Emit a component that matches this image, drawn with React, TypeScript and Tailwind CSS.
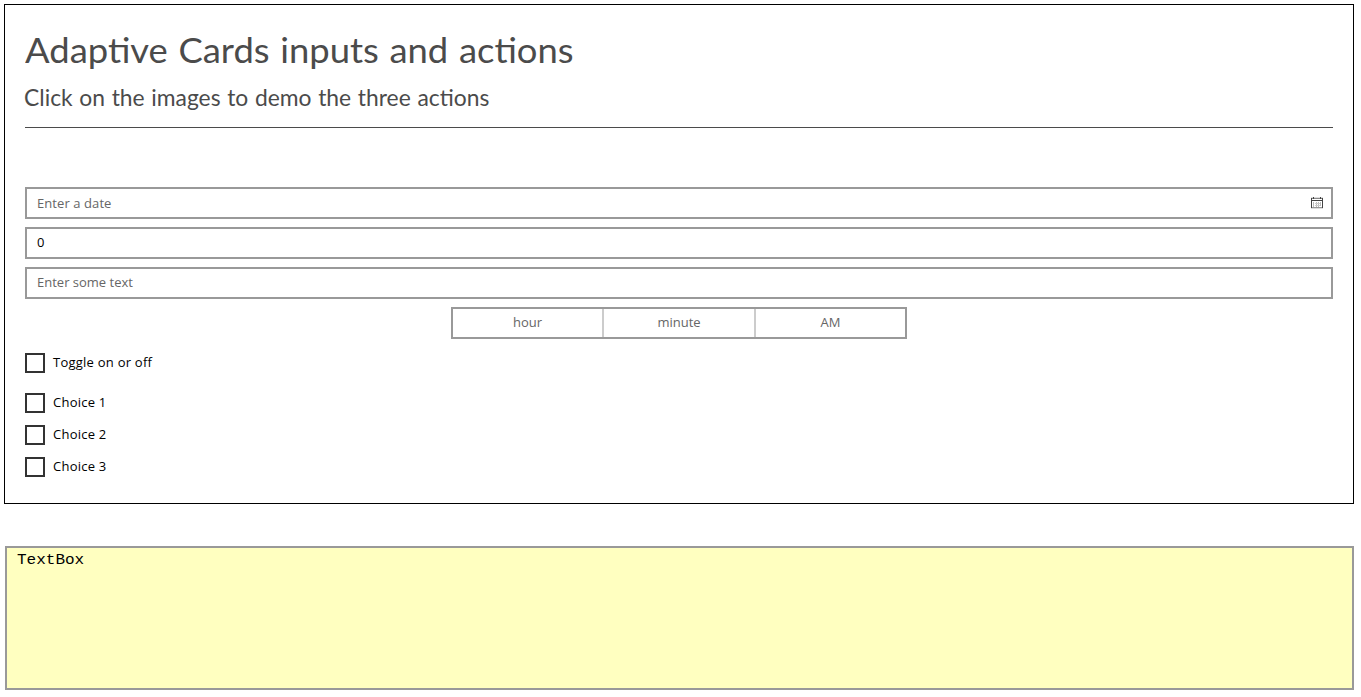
const field = "box-border flex h-8 items-center border-2 border-[#999] pl-2.5 pr-2";

function CalendarIcon() {
  return (
    <svg width="12" height="12" viewBox="0 0 12 12" fill="none" shapeRendering="crispEdges">
      <path d="M0 0.5H12" stroke="#ddd" />
      <path d="M0 1.5H12" stroke="#888" />
      <path d="M0 3.5H12" stroke="#444" />
      <path d="M0.5 1V11M11.5 1V11M2.5 0V2M9.5 0V2" stroke="#444" />
      <path d="M2.5 5V10M5.5 5V10M7.5 5V10M9.5 5V9" stroke="#bbb" />
      <path d="M4 6.5H9M4 8.5H9" stroke="#ccc" />
      <path d="M1 10.5H11" stroke="#999" />
      <path d="M0 11.5H12" stroke="#ddd" />
    </svg>
  );
}

function Check({ label }: { label: string }) {
  return (
    <label className="flex h-5 items-center gap-2">
      <span className="h-5 w-5 border-2 border-[#333]" />
      <span className="relative -top-px tracking-[0.24px] text-black">{label}</span>
    </label>
  );
}

export default function App() {
  return (
    <div className="h-[697px] w-[1361px] overflow-hidden bg-white pl-1 pt-1 font-['Open_Sans','Noto_Sans',sans-serif] text-[13px] leading-5 text-[#666]">
      <main className="flex h-[500px] w-[1350px] flex-col border border-black px-5">
        <h1 className="mt-[18px] h-[52px] w-fit origin-left scale-x-[1.04] font-[Lato,sans-serif] text-[35px] leading-[52px] text-[#4b4b4b] [word-spacing:1.3px]">Adaptive Cards inputs and actions</h1>
        <h2 className="-ml-px mt-[7px] h-8 w-fit origin-left scale-x-[1.015] font-[Lato,sans-serif] text-[22.5px] leading-8 text-[#4b4b4b] [word-spacing:0.8px]">Click on the images to demo the three actions</h2>
        <hr className="mt-[13px] border-t border-[#4b4b4b]" />
        <div className="mt-[59px] flex flex-col gap-2">
          <div className={field + " justify-between"}>
            <span className="tracking-[0.08px]">Enter a date</span>
            <CalendarIcon />
          </div>
          <div className={field + " pb-0.5 text-black"}>0</div>
          <div className={field + " pb-0.5"}>Enter some text</div>
          <div className="mx-auto grid h-8 w-[456px] grid-cols-[151px_152px_149px] divide-x-2 divide-[#ccc] border-2 border-[#999] text-center leading-[26px]">
            <span>hour</span><span>minute</span><span>AM</span>
          </div>
        </div>
        <div className="mt-3.5"><Check label="Toggle on or off" /></div>
        <div className="mt-5 flex flex-col gap-3">
          <Check label="Choice 1" />
          <Check label="Choice 2" />
          <Check label="Choice 3" />
        </div>
      </main>
      <div className="ml-px mt-[42px] h-36 w-[1349px] border-2 border-[#999] bg-[#ffffc0] px-2.5 pt-0.5 font-['Courier_New','Liberation_Mono',monospace] text-[14px] text-black">
        <div className="w-fit origin-left scale-x-[1.143]">TextBox</div>
      </div>
    </div>
  );
}
